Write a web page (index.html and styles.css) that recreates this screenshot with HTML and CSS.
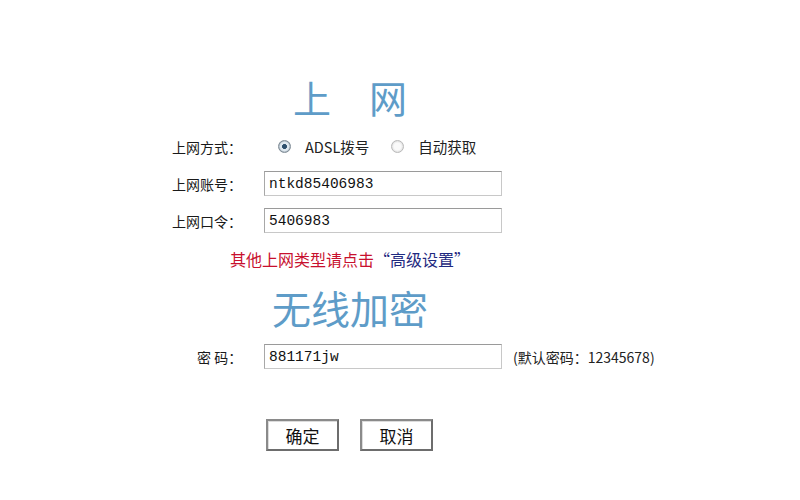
FILE: index.html
```html
<!DOCTYPE html>
<html lang="zh-CN">
<head>
    <meta charset="UTF-8">
    <title>上网设置</title>
    <link rel="stylesheet" href="styles.css">
</head>
<body>
    <div class="wizard">
        <h2 class="section-title">上　网</h2>

        <div class="form-grid">
            <label class="field-label">上网方式：</label>
            <div class="radio-group">
                <label class="radio"><input type="radio" name="wan" checked><span>ADSL拨号</span></label>
                <label class="radio"><input type="radio" name="wan"><span>自动获取</span></label>
            </div>

            <label class="field-label">上网账号：</label>
            <input class="text-input" type="text" value="ntkd85406983">

            <label class="field-label">上网口令：</label>
            <input class="text-input" type="text" value="5406983">
        </div>

        <p class="hint">其他上网类型请点击<a href="#">“高级设置”</a></p>

        <h2 class="section-title wide">无线加密</h2>

        <div class="form-grid">
            <label class="field-label spaced">密 码：</label>
            <div class="input-with-note">
                <input class="text-input" type="text" value="881171jw">
                <span class="note">(默认密码：12345678)</span>
            </div>
        </div>

        <div class="actions">
            <button>确定</button>
            <button>取消</button>
        </div>
    </div>
</body>
</html>
```

FILE: styles.css
```css
/* Page */
body {
    margin: 0;
    background: #ffffff;
    color: #222;
    font-family: "Noto Sans CJK SC", "DejaVu Sans", sans-serif;
    font-size: 14px;
}

.wizard {
    width: 500px;
    margin-left: 100px;
    padding-top: 75px;
}

/* Headings */
.section-title {
    margin: 0 0 15px;
    text-align: center;
    font-size: 38px;
    line-height: 44px;
    font-weight: normal;
    color: #5e9cc8;
}

.section-title.wide {
    font-size: 39px;
    margin: 15px 0 15px;
}

/* Form rows */
.form-grid {
    display: grid;
    grid-template-columns: 92px 238px;
    grid-auto-rows: 25px;
    row-gap: 12px;
    padding-left: 72px;
    align-items: center;
}

.field-label {
    font-size: 14px;
    color: #1a1a1a;
    white-space: nowrap;
}

.field-label.spaced {
    padding-left: 25px;
}

.radio-group {
    display: flex;
    align-items: center;
    gap: 22px;
    padding-left: 14px;
    white-space: nowrap;
}

.radio {
    display: flex;
    align-items: center;
    gap: 14px;
    font-size: 14.5px;
}

.radio input {
    appearance: none;
    margin: 0;
    width: 13px;
    height: 13px;
    border-radius: 50%;
    border: 1px solid #b9b9b9;
    background: radial-gradient(circle, #fafafa 0 45%, #e3e3e3 70%);
}

.radio input:checked {
    border-color: #7f8c96;
    background: radial-gradient(circle, #2d4f6c 0 28%, #dfe8ef 36% 55%, #9aa7b2 75%);
}

.text-input {
    box-sizing: border-box;
    flex: none;
    width: 238px;
    height: 25px;
    margin: 0;
    padding: 0 4px;
    border: 1px solid #c8c8c8;
    border-top-color: #9a9a9a;
    border-left-color: #a8a8a8;
    font-family: "Liberation Mono", "DejaVu Sans Mono", monospace;
    font-size: 14.5px;
    color: #111;
    outline: none;
}

.input-with-note {
    display: flex;
    align-items: center;
    gap: 11px;
    white-space: nowrap;
}

.note {
    font-size: 14px;
    color: #222;
}

/* Red hint line */
.hint {
    margin: 15px 0 0;
    text-align: center;
    font-size: 16px;
    line-height: 22px;
    color: #c8102e;
}

.hint a {
    color: #1f2a80;
    text-decoration: none;
}

/* Buttons */
.actions {
    display: flex;
    gap: 21px;
    margin-top: 50px;
    padding-left: 166px;
}

button {
    width: 73px;
    height: 32px;
    background: #fff;
    border: 2px solid #8a8a8a;
    border-right-color: #6d6d6d;
    border-bottom-color: #6d6d6d;
    box-shadow: inset 1px 1px 0 #dcdcdc;
    font-family: "Noto Sans CJK SC", sans-serif;
    font-size: 17px;
    color: #111;
    cursor: pointer;
}
```
